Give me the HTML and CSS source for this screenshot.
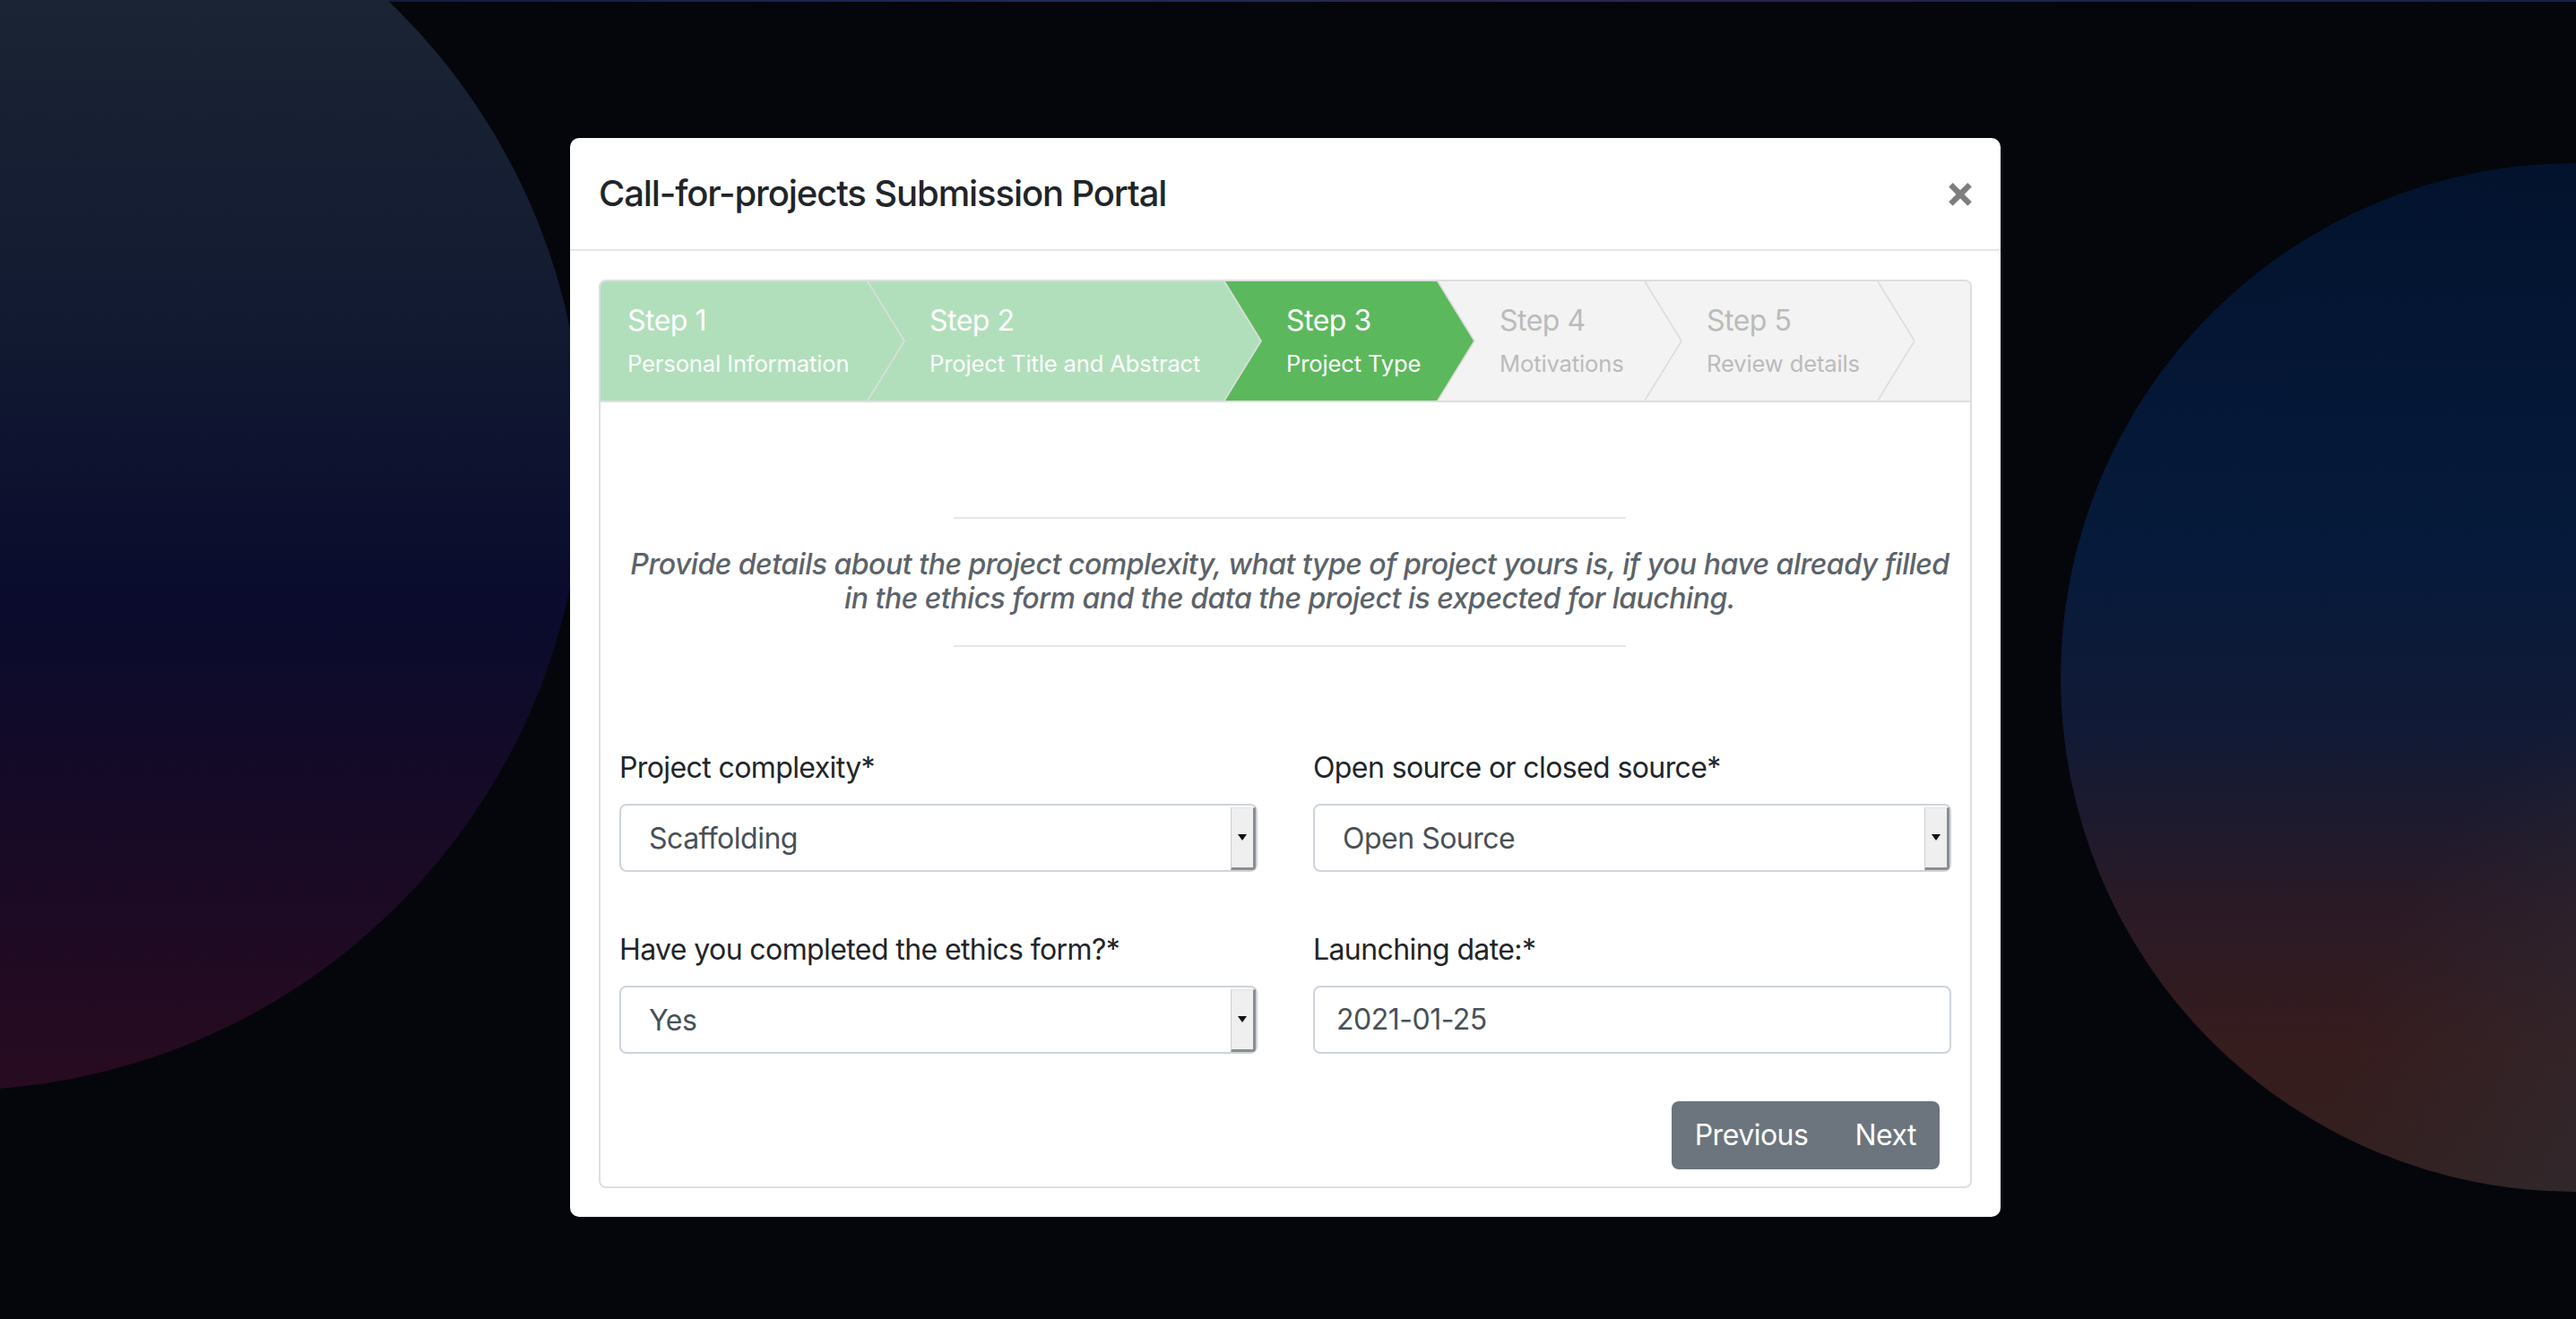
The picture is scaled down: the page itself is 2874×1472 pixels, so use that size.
FILE: index.html
```html
<!DOCTYPE html>
<html lang="en">
<head>
<meta charset="utf-8">
<title>Call-for-projects Submission Portal</title>
<link rel="stylesheet" href="styles.css">
</head>
<body>
<div class="backdrop">
  <div class="orb orb-left"></div>
  <div class="orb orb-right"></div>
</div>

<div class="modal">
  <div class="modal-header">
    <h5 class="modal-title">Call-for-projects Submission Portal</h5>
    <button class="close" type="button" aria-label="Close">&times;</button>
  </div>
  <div class="modal-body">
    <div class="wizard">
      <ul class="steps">
        <li class="step done s1"><span class="step-num">Step 1</span><small>Personal Information</small></li>
        <li class="step done s2"><span class="step-num">Step 2</span><small>Project Title and Abstract</small></li>
        <li class="step active s3"><span class="step-num">Step 3</span><small>Project Type</small></li>
        <li class="step todo s4"><span class="step-num">Step 4</span><small>Motivations</small></li>
        <li class="step todo s5"><span class="step-num">Step 5</span><small>Review details</small></li>
        <li class="step-fill"></li>
      </ul>
      <div class="wizard-content">
        <div class="intro">
          <hr class="rule">
          <h6 class="intro-text"><em>Provide details about the project complexity, what type of project yours is, if you have already filled<br>in the ethics form and the data the project is expected for lauching.</em></h6>
          <hr class="rule">
        </div>
        <form class="form-grid">
          <div class="field">
            <label class="field-label">Project complexity*</label>
            <div class="select"><span class="select-value">Scaffolding</span><span class="select-btn"><span class="caret"></span></span></div>
          </div>
          <div class="field">
            <label class="field-label">Open source or closed source*</label>
            <div class="select"><span class="select-value">Open Source</span><span class="select-btn"><span class="caret"></span></span></div>
          </div>
          <div class="field">
            <label class="field-label">Have you completed the ethics form?*</label>
            <div class="select"><span class="select-value">Yes</span><span class="select-btn"><span class="caret"></span></span></div>
          </div>
          <div class="field">
            <label class="field-label">Launching date:*</label>
            <div class="input">2021-01-25</div>
          </div>
        </form>
        <div class="toolbar">
          <div class="btn-group">
            <button class="btn btn-prev" type="button">Previous</button>
            <button class="btn btn-next" type="button">Next</button>
          </div>
        </div>
      </div>
    </div>
  </div>
</div>
</body>
</html>
```

FILE: styles.css
```css
* { box-sizing: border-box; }

html, body {
  margin: 0;
  height: 100%;
}

body {
  background: linear-gradient(90deg, #0c1330, #1d2a5a 40%, #2a2450 60%, #14224a) top left / 100% 2px no-repeat, #05060b;
  font-family: Inter, "Noto Sans", sans-serif;
  overflow: hidden;
  padding-top: 154px;
}

.backdrop {
  position: fixed;
  inset: 0;
  z-index: 0;
  overflow: hidden;
}

.orb {
  position: absolute;
  border-radius: 50%;
}

.orb-left {
  left: -761px;
  top: -195px;
  width: 1412px;
  height: 1412px;
  background: linear-gradient(to bottom, #1f2a3a 0%, #1b2434 14%, #111a31 40%, #0a0b2d 62%, #1a0a25 82%, #280b20 100%);
}

.orb-right {
  left: 2299px;
  top: 182px;
  width: 1148px;
  height: 1148px;
  background:
    radial-gradient(circle at 85% 100%, #2e313b 0%, rgba(46, 49, 59, 0) 45%),
    linear-gradient(to bottom, #03132e 0%, #061a3b 38%, #111a36 55%, #2a1a26 72%, #361c1d 86%, #33201f 100%);
}

.modal {
  position: relative;
  z-index: 1;
  width: 1596px;
  margin: 0 0 0 636px;
  background: #fff;
  border-radius: 10px;
  color: #212529;
}

.modal-header {
  display: flex;
  align-items: center;
  justify-content: space-between;
  padding: 32px;
  border-bottom: 2px solid #e3e6e9;
}

.modal-title {
  margin: 0;
  font-size: 40px;
  font-weight: 500;
  line-height: 60px;
  letter-spacing: -1.1px;
  color: #212529;
}

.close {
  background: none;
  border: 0;
  margin-right: -4px;
  padding: 0 0 6px 0;
  font-family: Inter, "Noto Sans", sans-serif;
  font-size: 50px;
  font-weight: 700;
  line-height: 1;
  color: #000;
  opacity: 0.5;
}

.modal-body {
  padding: 32px;
}

.wizard {
  border: 2px solid #dedede;
  border-radius: 8px;
  overflow: hidden;
}

.steps {
  display: flex;
  margin: 0;
  padding: 0;
  list-style: none;
  height: 135px;
  background: #dddddd;
  border-bottom: 2px solid #dedede;
}

.step {
  flex: none;
  height: 100%;
  margin-left: -39px;
  padding: 20px 0 0 68px;
  font-size: 32px;
  line-height: 48px;
  letter-spacing: -0.5px;
  color: #fff;
  clip-path: polygon(0 0, calc(100% - 41px) 0, 100% 50%, calc(100% - 41px) 100%, 0 100%, 41px 50%);
}

.step:first-child {
  margin-left: 0;
  padding-left: 30px;
  clip-path: polygon(0 0, calc(100% - 41px) 0, 100% 50%, calc(100% - 41px) 100%, 0 100%);
}

.step-num,
.step small {
  display: block;
  white-space: nowrap;
}

.step small {
  font-size: 25.6px;
  letter-spacing: -0.15px;
}

.done { background: #b1dfbb; }
.active { background: #5cb85c; }
.todo { background: #f3f3f3; color: #bbbbbb; }

.s1 { width: 338px; }
.s2 { width: 437px; }
.s3 { width: 277px; }
.s4 { width: 270px; }
.s5 { width: 299px; }

.step-fill {
  flex: 1;
  margin-left: -39px;
  background: #f3f3f3;
  clip-path: polygon(0 0, 100% 0, 100% 100%, 0 100%, 41px 50%);
}

.wizard-content {
  padding: 0 21px 19px;
}

.intro {
  padding: 128px 0 0 10px;
}

.rule {
  width: 750px;
  margin: 0 auto;
  border: 0;
  border-top: 2px solid #e6e6e6;
}

.intro-text {
  margin: 32px 0;
  font-size: 32px;
  font-weight: 500;
  line-height: 1.2;
  letter-spacing: -0.5px;
  color: #5c636a;
  text-align: center;
  white-space: nowrap;
}

.form-grid {
  display: grid;
  grid-template-columns: 1fr 1fr;
  column-gap: 62px;
  row-gap: 63px;
  margin-top: 111px;
}

.field-label {
  display: block;
  margin-bottom: 16px;
  font-size: 32px;
  line-height: 48px;
  letter-spacing: -0.6px;
  color: #212529;
}

.select,
.input {
  display: flex;
  align-items: center;
  height: 76px;
  border: 2px solid #ced4da;
  border-radius: 8px;
  font-size: 32px;
  letter-spacing: -0.5px;
  color: #495057;
}

.select {
  padding: 2px 0 0 31px;
}

.input {
  padding-left: 24px;
}

.select-value {
  flex: 1;
}

.select-btn {
  display: flex;
  align-items: center;
  justify-content: center;
  align-self: stretch;
  width: 28px;
  background: #efefef;
  border-top: 1px solid #e2e2e2;
  border-left: 1px solid #cfcfcf;
  border-right: 3px solid #8d8d8d;
  border-bottom: 3px solid #8d8d8d;
  border-bottom-right-radius: 4px;
}

.caret {
  width: 0;
  height: 0;
  border-left: 5px solid transparent;
  border-right: 5px solid transparent;
  border-top: 7px solid #111;
}

.toolbar {
  display: flex;
  justify-content: flex-end;
  margin-top: 53px;
  padding-right: 13px;
}

.btn-group {
  display: inline-flex;
}

.btn {
  padding: 12px 24px;
  border: 2px solid #6c757d;
  background: #6c757d;
  color: #fff;
  font-family: Inter, "Noto Sans", sans-serif;
  font-size: 32px;
  line-height: 48px;
  letter-spacing: -0.5px;
}

.btn-prev { border-radius: 8px 0 0 8px; }
.btn-next { border-radius: 0 8px 8px 0; }
```
